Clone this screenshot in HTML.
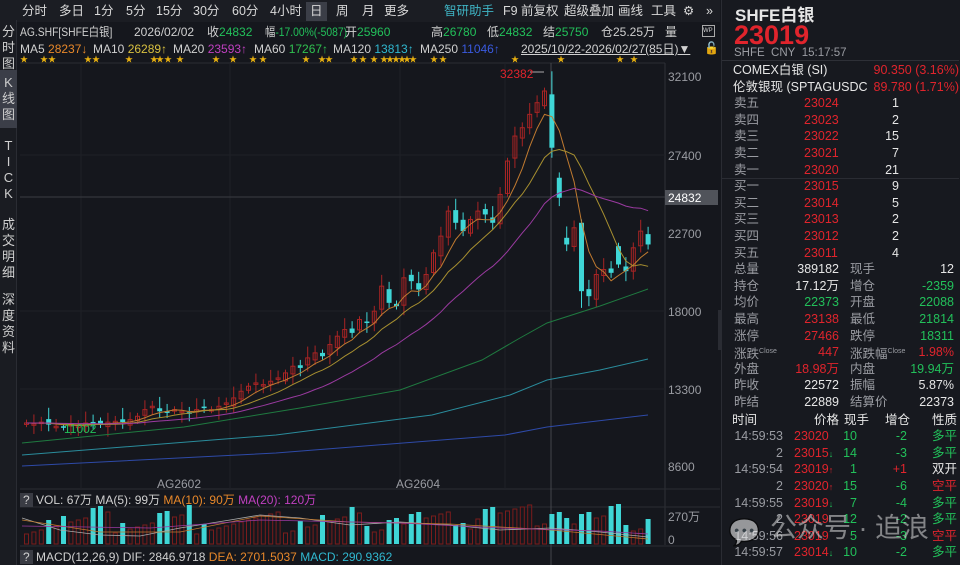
<!DOCTYPE html>
<html><head><meta charset="utf-8"><style>
*{margin:0;padding:0;box-sizing:border-box}
body{width:960px;height:565px;background:#15171d;color:#d0d0d0;font-family:"Liberation Sans","Noto Sans CJK SC",sans-serif;font-size:12px;position:relative;overflow:hidden}
.a{position:absolute;white-space:nowrap;line-height:14px}
.g{color:#22c05a}.r{color:#e0242c}.w{color:#e6e6e6}.gy{color:#9a9ca2}
#tb{position:absolute;left:0;top:0;width:720px;height:22px;background:#1b1d23}
#tb span{position:absolute;top:3px;font-size:12.5px;line-height:16px;color:#d8d8d8}
#lt{position:absolute;left:0;top:20px;width:17px;height:545px;background:#1a1c22;border-right:1px solid #2a2c33}
#lt div{position:absolute;left:0;width:17px;text-align:center;font-size:13px;line-height:16px;color:#cfcfcf}
#rp{position:absolute;left:721px;top:0;width:239px;height:565px;background:#17191f;border-left:1px solid #2a2c33}
.row{position:absolute;left:12px;width:220px;height:16px;font-size:12.5px}
.row span{position:absolute;top:0;line-height:16px;white-space:nowrap}
.m span{position:absolute;top:0}
.sq{transform:scaleX(0.86);transform-origin:0 0}
</style></head><body>
<div id="tb">
<span style="left:22px">分时</span><span style="left:59px">多日</span><span style="left:94px">1分</span><span style="left:126px">5分</span><span style="left:156px">15分</span><span style="left:193px">30分</span><span style="left:232px">60分</span><span style="left:270px">4小时</span>
<div style="position:absolute;left:306px;top:2px;width:21px;height:19px;background:#3b3e47"></div>
<span style="left:310px">日</span><span style="left:336px">周</span><span style="left:362px">月</span><span style="left:384px">更多</span>
<span style="left:444px;color:#3fb4c4">智研助手</span><span style="left:503px">F9</span><span style="left:521px">前复权</span><span style="left:564px">超级叠加</span><span style="left:618px">画线</span><span style="left:651px">工具</span><span style="left:683px">⚙</span><span style="left:706px">»</span>
</div>
<div id="lt">
<div style="top:4px">分<br>时<br>图</div>
<div style="top:50px;height:58px;background:#3b3e48;padding-top:5px">K<br>线<br>图</div>
<div style="top:118px">T<br>I<br>C<br>K</div>
<div style="top:197px">成<br>交<br>明<br>细</div>
<div style="top:272px">深<br>度<br>资<br>料</div>
</div>
<div class="a m" style="left:0;top:25px;font-size:12px;width:720px">
<span style="left:20px" class="sq">AG.SHF[SHFE白银]</span><span style="left:134px">2026/02/02</span><span style="left:207px">收<span class="g" style="position:static">24832</span></span><span style="left:265px" class="sq">幅<span class="g" style="position:static">-17.00%(-5087)</span></span><span style="left:345px">开<span class="g" style="position:static">25960</span></span><span style="left:431px">高<span class="g" style="position:static">26780</span></span><span style="left:487px">低<span class="g" style="position:static">24832</span></span><span style="left:543px">结<span class="g" style="position:static">25750</span></span><span style="left:601px">仓25.25万</span><span style="left:665px">量</span></div>
<div class="a" style="left:702px;top:25px;width:13px;height:12px;border:1px solid #aaa;font-size:6px;line-height:10px">WP</div>
<div class="a m" style="left:0;top:42px;font-size:12px;width:720px">
<span style="left:20px">MA5 <span style="position:static;color:#e8882a">28237↓</span></span><span style="left:93px">MA10 <span style="position:static;color:#d8c040">26289↑</span></span><span style="left:173px">MA20 <span style="position:static;color:#c040c0">23593↑</span></span><span style="left:254px">MA60 <span style="position:static;color:#30c050">17267↑</span></span><span style="left:333px">MA120 <span style="position:static;color:#30b8d0">13813↑</span></span><span style="left:420px">MA250 <span style="position:static;color:#3a5ae0">11046↑</span></span></div>
<div class="a" style="left:521px;top:42px;font-size:12px;text-decoration:underline;background:#15171d">2025/10/22-2026/02/27(85日)▼</div>
<div class="a" style="left:704px;top:41px;color:#e0a020;font-size:12px">🔓</div>
<div id="stars"></div>
<svg id="ch" width="720" height="565" style="position:absolute;left:0;top:0"></svg>
<div class="a" style="left:500px;top:67px;color:#e0242c;font-size:12px">32382</div>
<div class="a gy" style="left:668px;top:70px;font-size:12px">32100</div>
<div class="a gy" style="left:668px;top:149px;font-size:12px">27400</div>
<div class="a" style="left:665px;top:190px;width:53px;height:15px;background:#50535a;color:#fff;font-size:12px;padding:1px 0 0 3px">24832</div>
<div class="a gy" style="left:668px;top:227px;font-size:12px">22700</div>
<div class="a gy" style="left:668px;top:305px;font-size:12px">18000</div>
<div class="a gy" style="left:668px;top:383px;font-size:12px">13300</div>
<div class="a gy" style="left:668px;top:460px;font-size:12px">8600</div>
<div class="a" style="left:64px;top:422px;color:#22c05a;font-size:12px">11002</div>
<div class="a gy" style="left:157px;top:477px;font-size:12px">AG2602</div>
<div class="a gy" style="left:396px;top:477px;font-size:12px">AG2604</div>
<div class="a" style="left:20px;top:493px;font-size:12px"><span style="background:#3a3c44;padding:0 3px">?</span> VOL: 67万 MA(5): 99万 <span style="color:#e8882a">MA(10): 90万</span> <span style="color:#c040c0">MA(20): 120万</span></div>
<div class="a gy" style="left:668px;top:510px;font-size:12px">270万</div>
<div class="a gy" style="left:668px;top:533px;font-size:12px">0</div>
<div class="a" style="left:20px;top:550px;font-size:12px"><span style="background:#3a3c44;padding:0 3px">?</span> MACD(12,26,9) DIF: 2846.9718 <span style="color:#e8882a">DEA: 2701.5037</span> <span style="color:#30b8d0">MACD: 290.9362</span></div>
<div id="rp">
<div class="a w" style="left:13px;top:6px;font-size:17px;line-height:20px;font-weight:bold">SHFE白银</div>
<div class="a r" style="left:12px;top:21px;font-size:27px;line-height:28px;font-weight:bold">23019</div>
<div class="a gy" style="left:12px;top:46px;font-size:11.5px">SHFE&nbsp; CNY&nbsp; 15:17:57</div>
<div style="position:absolute;left:0;top:60px;width:237px;height:1px;background:#2e3037"></div>
<div id="rows"></div>
</div>
<div class="a" style="left:718px;top:310px;width:4px;height:40px;background:#2a2c33"></div>
<div class="a" style="left:728px;top:517px;font-size:26px;line-height:30px;color:rgba(220,220,220,0.55)">💬</div>
<div class="a" style="left:770px;top:512px;font-size:27px;line-height:32px;color:rgba(220,220,220,0.55)">公众号 · 追浪</div>
<script>
var svg=document.getElementById('ch'),h='';
function Y(p){return 76+(32100-p)*0.01668}
h+='<line x1="20" y1="63" x2="665" y2="63" stroke="#2a2c33"/>';
h+='<line x1="665" y1="63" x2="665" y2="545" stroke="#2e3037"/>';
h+='<line x1="20" y1="489" x2="720" y2="489" stroke="#2a2c33"/><line x1="20" y1="507" x2="720" y2="507" stroke="#2a2c33"/><line x1="20" y1="546" x2="720" y2="546" stroke="#2a2c33"/>';
h+='<line x1="81" y1="63" x2="81" y2="489" stroke="#1f2127"/><line x1="230" y1="63" x2="230" y2="489" stroke="#1f2127"/><line x1="400" y1="63" x2="400" y2="489" stroke="#1f2127"/><line x1="505" y1="63" x2="505" y2="489" stroke="#1f2127"/>';
h+='<line x1="20" y1="197" x2="665" y2="197" stroke="#3a3c42"/>';
h+='<line x1="551" y1="63" x2="551" y2="565" stroke="#44464c"/>';
h+='<line x1="20" y1="155" x2="665" y2="155" stroke="#1f2127"/><line x1="20" y1="311" x2="665" y2="311" stroke="#1f2127"/><line x1="20" y1="389" x2="665" y2="389" stroke="#1f2127"/>';
var C=[11300,11250,11350,11200,11100,11050,11200,11150,11300,11250,11200,11350,11400,11350,11500,11700,12100,12300,12000,11900,12100,12000,11900,12100,12200,12100,12300,12500,12800,13200,13500,13700,13600,13800,14000,14300,14700,14600,15200,15500,15300,16000,16500,16900,16700,17500,17300,18000,19500,18500,18300,20000,19800,19300,20200,21500,22500,24000,23300,22800,23500,24000,23800,23300,25000,27000,28500,29000,29800,30500,31200,27800,24800,22000,23000,19200,18900,20200,20500,20300,20800,20400,21800,22800,22000];
var O=[];for(var i=0;i<C.length;i++){O[i]=i?C[i-1]+((i*37)%7-3)*60:11250}
O[71]=31000;O[72]=26000;O[73]=22400;O[75]=23300;O[80]=21900;
var vol='';
for(i=0;i<C.length;i++){var x=24+i*7.4,o=O[i],c=C[i],up=c>=o,hi=Math.max(o,c)+200+((i*53)%5)*120,lo=Math.min(o,c)-200-((i*29)%5)*100;
if(i==71)hi=32382;if(i==75)lo=18200;
var col=up?'#a82424':'#3fd6d6',yt=Y(Math.max(o,c)),yb=Y(Math.min(o,c));if(yb-yt<1.5)yb=yt+1.5;
h+='<line x1="'+(x+2.5)+'" y1="'+Y(hi)+'" x2="'+(x+2.5)+'" y2="'+Y(lo)+'" stroke="'+col+'"/>';
h+=up?'<rect x="'+(x+0.5)+'" y="'+yt+'" width="4" height="'+(yb-yt)+'" fill="none" stroke="'+col+'"/>':'<rect x="'+x+'" y="'+yt+'" width="5" height="'+(yb-yt)+'" fill="'+col+'"/>';
var v=10+((i*71)%23)+(up?0:8);if(i>60&&i<73)v+=8;
vol+=up?'<rect x="'+(x+0.5)+'" y="'+(544-v)+'" width="4" height="'+v+'" fill="none" stroke="#7a1c1c"/>':'<rect x="'+x+'" y="'+(544-v)+'" width="5" height="'+v+'" fill="#3fd6d6"/>';}
function ma(n,col){var p='';for(var i=0;i<C.length;i++){var s=0;for(var k=0;k<n;k++)s+=C[Math.max(0,i-k)];p+=(24+i*7.4+2.5)+','+Y(s/n)+' ';}h+='<polyline points="'+p+'" fill="none" stroke="'+col+'" stroke-width="1"/>';}
ma(5,'#c07a30');ma(10,'#a89030');ma(20,'#9a3aa0');
h+='<polyline points="22,443 184,427 300,408 400,390 482,360 520,338 547,323 600,306 648,289" fill="none" stroke="#1f7a40"/>';
h+='<polyline points="22,455 276,435 432,415 510,395 547,380 600,370 648,359" fill="none" stroke="#2a8c9c"/>';
h+='<polyline points="22,466 276,453 505,435 547,427 648,415" fill="none" stroke="#2e4aa8"/>';
h+='<line x1="530" y1="72" x2="544" y2="72" stroke="#aaa"/>';
h+=vol;
h+='<polyline points="22,518 60,530 100,535 140,536 180,528 230,520 260,515 300,518 350,525 400,522 450,525 500,530 551,528 600,532 648,537" fill="none" stroke="#aaa" stroke-width="0.8"/>';
h+='<polyline points="22,520 100,532 180,532 260,516 350,522 450,524 551,530 648,539" fill="none" stroke="#c07a30" stroke-width="0.8"/>';
h+='<polyline points="22,526 150,528 260,520 400,523 500,528 600,531 648,534" fill="none" stroke="#9a3aa0" stroke-width="0.8"/>';
svg.innerHTML=h;
var S=[22,42,50,86,94,127,152,158,166,178,214,231,251,261,304,320,327,352,361,372,382,388,394,400,405,411,432,441,513,559,618,632],st='';
S.forEach(function(x){st+='<div class="a" style="left:'+(x-2)+'px;top:55px;font-size:8px;line-height:9px;color:#e8b010">★</div>'});
document.getElementById('stars').innerHTML=st;
var R=[
['COMEX白银 (SI)','','','90.350 (3.16%)'],
['伦敦银现 (SPTAGUSDC','','','89.780 (1.71%)'],
['卖五','23024','1'],['卖四','23023','2'],['卖三','23022','15'],['卖二','23021','7'],['卖一','23020','21'],
['买一','23015','9'],['买二','23014','5'],['买三','23013','2'],['买四','23012','2'],['买五','23011','4']];
var rh='',y=62;
R.forEach(function(r,i){if(i<2){rh+='<div class="row" style="top:'+y+'px;left:11px;width:226px"><span class="w">'+r[0]+'</span><span class="r" style="right:0;background:#17191f">'+r[3]+'</span></div>';}
else rh+='<div class="row" style="top:'+y+'px"><span class="gy">'+r[0]+'</span><span class="r" style="left:70px">'+r[1]+'</span><span class="w" style="right:55px">'+r[2]+'</span></div>';
if(i==6)rh+='<div style="position:absolute;left:0;top:'+(y+16)+'px;width:237px;height:1px;background:#2a2c33"></div>';
y+=16.6;});
var T=[['总量','389182','w','现手','12','w'],['持仓','17.12万','w','增仓','-2359','g'],['均价','22373','g','开盘','22088','g'],['最高','23138','r','最低','21814','g'],['涨停','27466','r','跌停','18311','g'],['涨跌<sup style="font-size:7px">Close</sup>','447','r','涨跌幅<sup style="font-size:7px">Close</sup>','1.98%','r'],['外盘','18.98万','r','内盘','19.94万','g'],['昨收','22572','w','振幅','5.87%','w'],['昨结','22889','w','结算价','22373','w']];
T.forEach(function(t){rh+='<div class="row" style="top:'+y+'px"><span class="gy">'+t[0]+'</span><span class="'+t[2]+'" style="right:115px">'+t[1]+'</span><span class="gy" style="left:116px">'+t[3]+'</span><span class="'+t[5]+'" style="right:0">'+t[4]+'</span></div>';y+=16.6;});
y+=1;
rh+='<div class="row" style="top:'+y+'px;left:10px;width:225px"><span class="w">时间</span><span class="w" style="right:118px">价格</span><span class="w" style="left:112px">现手</span><span class="w" style="right:47px">增仓</span><span class="w" style="right:0">性质</span></div>';y+=16.6;
var K=[['14:59:53','23020','','10','-2','g','多平','g'],['2','23015','↓','14','-3','g','多平','g'],['14:59:54','23019','↑','1','+1','r','双开','w'],['2','23020','↑','15','-6','g','空平','r'],['14:59:55','23019','↓','7','-4','g','多平','g'],['2','23019','','12','-2','g','多平','g'],['14:59:56','23019','','5','-3','g','空平','r'],['14:59:57','23014','↓','10','-2','g','多平','g']];
K.forEach(function(k){rh+='<div class="row" style="top:'+y+'px;left:10px;width:225px"><span class="gy" style="right:174px">'+k[0]+'</span><span class="r" style="left:62px">'+k[1]+'<b style="font-weight:normal;font-size:9px;color:'+(k[2]=='↑'?'#e0242c':'#22c05a')+'">'+k[2]+'</b></span><span class="g" style="right:100px">'+k[3]+'</span><span class="'+k[5]+'" style="right:50px">'+k[4]+'</span><span class="'+k[7]+'" style="right:0">'+k[6]+'</span></div>';y+=16.6;});
document.getElementById('rows').innerHTML=rh;
</script>
</body></html>
